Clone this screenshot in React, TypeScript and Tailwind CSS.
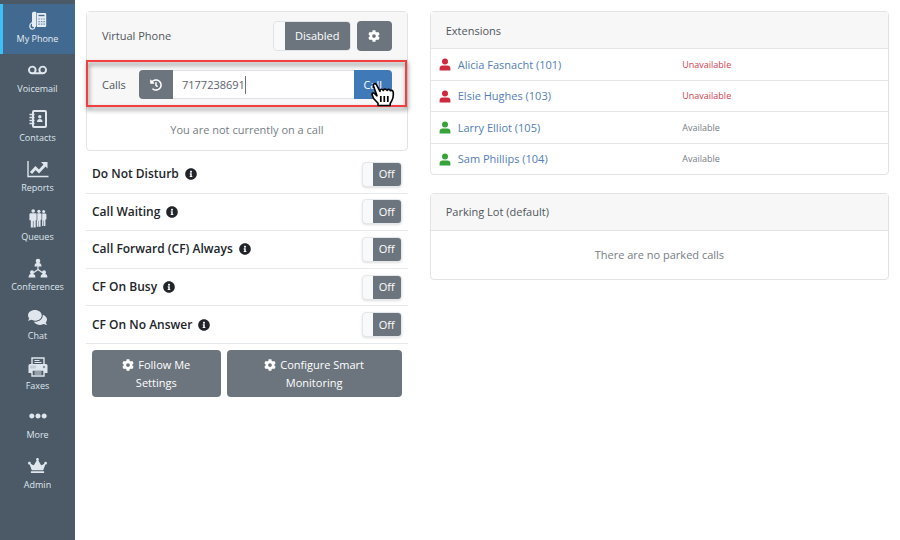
import { useState } from "react";
import type { ReactNode } from "react";
import { FaCog, FaComments, FaCrown, FaEllipsisH, FaHistory, FaInfoCircle, FaVoicemail } from "react-icons/fa";

function DeskPhoneIcon() {
  return (
    <svg viewBox="0 0 18 19" className="h-[19px] w-[18px]" fill="currentColor">
      <path d="M4.600.8h1.600a1.200 1.200 0 0 1 1.200 1.200v12.800a1.200 1.200 0 0 1-1.200 1.200H4.600A1.600 1.600 0 0 1 3 14.400v-12A1.600 1.600 0 0 1 4.600.8z" />
      <path d="M8 2h8a1.200 1.200 0 0 1 1.200 1.200v11.600A1.200 1.200 0 0 1 16 16H8z" />
      <path d="M9.500 4.500h6" stroke="#42698f" strokeWidth="1.400" />
      <path d="M9.300 8h6.600M9.300 10.600h6.600M9.300 13.200h6.600" stroke="#7390ad" strokeWidth="1.200" strokeDasharray="1.600 .9" />
      <path d="M3.200 11.500C1.300 12.500.5 14.200.9 16c.4 1.800 1.800 2.200 3.200 2 1.200-.2 1.600-1 1.600-2" fill="none" stroke="currentColor" strokeWidth="1.200" />
    </svg>
  );
}

function ContactsIcon() {
  return (
    <svg viewBox="0 0 18 18" className="h-[18px] w-[18px]" fill="none" stroke="currentColor">
      <rect x="4" y="1" width="13" height="16" rx="1" strokeWidth="2" />
      <path d="M0.500 4.500h5M0.500 7.500h5M0.500 10.500h5M0.500 13.500h5" strokeWidth="1.600" />
      <circle cx="10.800" cy="6.800" r="1.700" fill="currentColor" stroke="none" />
      <path d="M8 12c0-2 1-3 2.800-3s2.800 1 2.800 3z" fill="currentColor" stroke="none" />
    </svg>
  );
}

function ReportsIcon() {
  return (
    <svg viewBox="0 0 22 18" className="h-[18px] w-[22px]" fill="none" stroke="currentColor">
      <path d="M1 1v15.500h20.500" strokeWidth="1.400" />
      <path d="M4 13l4.500-5 3.500 3.500 6-6.500" strokeWidth="2.800" />
      <path d="M14 2h6.500v6.500z" fill="currentColor" stroke="none" />
    </svg>
  );
}

function QueuesIcon() {
  return (
    <svg viewBox="0 0 18 19" className="h-[19px] w-[18px]" fill="currentColor">
      <circle cx="4.200" cy="2" r="1.800" />
      <path d="M1.800 4.200h4.800q1 0 1 1v6H6.700V18.500H4.500V12h-.6v6.500H1.800v-7.200H.4V5.200q0-1 1.400-1z" />
      <circle cx="9.900" cy="2.300" r="1.600" />
      <path d="M8.300 4.300h3.100q1.100 0 1.100 1v5.500h-.9v7H9.800v-6h-.4v6H7.800v-6.200l.5-.4z" />
      <circle cx="14.700" cy="2.600" r="1.500" />
      <path d="M13.200 4.600h2.800q1.400 0 1.400 1v5h-1v6.400H15v-5.400h-.5V17h-1.400z" />
    </svg>
  );
}

function ConferencesIcon() {
  return (
    <svg viewBox="0 0 20 20" className="h-5 w-5" fill="currentColor">
      <circle cx="10" cy="3" r="2.300" />
      <path d="M6.500 8.400q0-3 2.500-3.300h2q2.500.3 2.500 3.300z" />
      <path d="M10 8v4M10 11.500l-4.500 3.200M10 11.500l4.500 3.200" fill="none" stroke="currentColor" strokeWidth="1.200" />
      <circle cx="4" cy="14.200" r="2" />
      <path d="M.6 19.500q0-3 2.400-3.400h2q2.400.4 2.400 3.400z" />
      <circle cx="16" cy="14.200" r="2" />
      <path d="M12.600 19.500q0-3 2.400-3.400h2q2.400.4 2.400 3.400z" />
    </svg>
  );
}

function FaxIcon() {
  return (
    <svg viewBox="0 0 20 20" className="h-5 w-5">
      <path d="M4 7V1h12v6" fill="none" stroke="#dfe6ee" strokeWidth="1.400" />
      <path d="M6.500 3.500h5M6.500 5.500h7" stroke="#dfe6ee" strokeWidth="1" />
      <path d="M2 7h16q1.500 0 1.500 1.500V16H.5V8.500Q.5 7 2 7z" fill="#dfe6ee" />
      <path d="M3 8.500v3M5 8.500v3M7 8.500v3" stroke="#a9b4c0" strokeWidth="1" />
      <circle cx="16" cy="10" r="1.200" fill="#8794a1" />
      <path d="M4 13h12v6H4z" fill="#4c5a67" stroke="#dfe6ee" strokeWidth="1.400" />
      <path d="M6.500 15h7M6.500 17h7" stroke="#dfe6ee" strokeWidth="1.200" />
    </svg>
  );
}

function PersonIcon({ className }: { className: string }) {
  return (
    <svg viewBox="0 0 12 13" className={`h-[13px] w-3 ${className}`} fill="currentColor">
      <circle cx="6" cy="3.400" r="3" />
      <path d="M.6 12.400V10.500Q.6 7.400 3.600 7.400h4.800q3 0 3 3.100v1.900z" />
    </svg>
  );
}

function HandCursor() {
  return (
    <svg viewBox="0 0 24 26" className="h-[26px] w-6" fill="#fff" stroke="#000" strokeWidth="1.600" strokeLinejoin="round">
      <path d="M7 24.500v-2.200L2.600 17.500 1 13.400c-.2-1.300 1.500-1.900 2.600-.8L6 14.800 2.500 5C1.800 2.800 4.400 1.700 5.400 3.700L9 10.400C8.800 8 11.200 7.600 12.300 9.500c.2-1.900 2.900-1.900 3.800 0 .4-1.600 2.800-1.400 3.300.3 1.200-.9 2.700-.2 2.800 1.500.4 3.500-.1 6.200-1.500 8.500l-1.500 2.700v2z" />
      <path d="M9.800 15v6M13.300 15v6M16.800 15v6" strokeWidth="1.700" />
    </svg>
  );
}

const navItems: { label: string; icon: ReactNode }[] = [
  { label: "My Phone", icon: <DeskPhoneIcon /> },
  { label: "Voicemail", icon: <FaVoicemail size={19} /> },
  { label: "Contacts", icon: <ContactsIcon /> },
  { label: "Reports", icon: <ReportsIcon /> },
  { label: "Queues", icon: <QueuesIcon /> },
  { label: "Conferences", icon: <ConferencesIcon /> },
  { label: "Chat", icon: <FaComments size={19} /> },
  { label: "Faxes", icon: <FaxIcon /> },
  { label: "More", icon: <FaEllipsisH size={18} /> },
  { label: "Admin", icon: <FaCrown size={19} /> },
];

const features = ["Do Not Disturb", "Call Waiting", "Call Forward (CF) Always", "CF On Busy", "CF On No Answer"];

const extensions = [
  { name: "Alicia Fasnacht", number: 101, available: false },
  { name: "Elsie Hughes", number: 103, available: false },
  { name: "Larry Elliot", number: 105, available: true },
  { name: "Sam Phillips", number: 104, available: true },
];

function Sidebar() {
  return (
    <nav className="w-[75px] shrink-0 bg-[#4c5a67] pt-1">
      <ul className="grid h-[495px] auto-rows-fr">
        {navItems.map((item, i) => (
          <li key={item.label}>
            <a
              href="#"
              className={`flex h-full flex-col items-center border-l-3 pr-[3px] pt-1.5 text-[9px] leading-[18px] ${
                i === 0 ? "border-[#3fc0f5] bg-[#42698f] text-[#e6edf5]" : "border-transparent text-[#dfe6ee]"
              }`}
            >
              <span className="flex h-5 items-center">{item.icon}</span>
              <span>{item.label}</span>
            </a>
          </li>
        ))}
      </ul>
    </nav>
  );
}

function FeatureRow({ label }: { label: string }) {
  const [on, setOn] = useState(false);

  return (
    <li className="flex items-center justify-between border-b border-[#e6e9ec] px-1.5">
      <span className="flex items-center gap-1.5 text-xs font-semibold text-[#212529]">
        {label}
        <FaInfoCircle size={12} />
      </span>
      <button
        role="switch"
        aria-checked={on}
        aria-label={label}
        onClick={() => setOn(!on)}
        className="flex h-[25px] w-10 overflow-hidden rounded-sm border border-[#e4e7ea] bg-[#f8f9fa] text-white shadow-sm"
      >
        <span className="ml-auto flex h-full w-7 items-center justify-center bg-[#6c757d]">{on ? "On" : "Off"}</span>
      </button>
    </li>
  );
}

function PhonePanel() {
  const [number, setNumber] = useState("7177238691");

  return (
    <section className="px-[11px]">
      <div className="relative rounded-sm border border-[#e3e3e3]">
        <div className="flex items-center justify-between border-b border-[#e3e3e3] bg-[#f7f7f7] px-[15px] py-[9px]">
          <h2 className="text-[#4f565c]">Virtual Phone</h2>
          <div className="flex gap-1.5">
            <button
              role="switch"
              aria-checked="false"
              aria-label="Virtual Phone"
              className="flex h-[30px] w-[78px] overflow-hidden rounded-sm border border-[#e1e4e7] bg-[#f8f9fa] text-white"
            >
              <span className="ml-auto flex h-full w-[65px] items-center justify-center bg-[#6c757d]">Disabled</span>
            </button>
            <button aria-label="Phone settings" className="flex h-[30px] w-[35px] items-center justify-center rounded-sm bg-[#6c757d] text-white">
              <FaCog size={12} />
            </button>
          </div>
        </div>
        <div className="flex items-center bg-[#f7f7f7] px-[15px] py-[9px]">
          <label htmlFor="dial" className="w-[37px] text-[#4f565c]">Calls</label>
          <button aria-label="Call history" className="flex h-[29px] w-[34px] items-center justify-center rounded-l-sm bg-[#6c757d] text-white">
            <FaHistory size={12} />
          </button>
          <div className="flex h-[29px] min-w-0 flex-1 items-center border-y border-[#dde1e6] bg-white pl-[9px]">
            <input
              id="dial"
              type="text"
              value={number}
              onChange={(e) => setNumber(e.target.value)}
              className="field-sizing-content border-r border-[#6f757b] text-[#5c636a] outline-none"
            />
          </div>
          <button className="h-[29px] w-[38px] rounded-r-sm bg-[#3f79b7] text-white">Call</button>
        </div>
        <p className="pb-[11px] pt-[13px] text-center text-[#767d84]">You are not currently on a call</p>
        <div className="pointer-events-none absolute -left-px right-0 top-12 h-[47px] border-2 border-[#f23f40] drop-shadow-[1px_3px_2px_rgba(0,0,0,0.5)]" />
        <div className="pointer-events-none absolute right-3 top-[69px]">
          <HandCursor />
        </div>
      </div>

      <ul className="mt-[5px] grid h-[188px] auto-rows-fr">
        {features.map((label) => (
          <FeatureRow key={label} label={label} />
        ))}
      </ul>

      <div className="mt-1.5 grid grid-cols-[11fr_15fr] gap-1.5 px-1.5 text-white">
        <button className="rounded-sm bg-[#6c757d] px-7 pb-[5px] pt-1.5">
          <FaCog size={12} className="mr-1 inline-block align-[-2px]" />
          Follow Me Settings
        </button>
        <button className="rounded-sm bg-[#6c757d] px-7 pb-[5px] pt-1.5">
          <FaCog size={12} className="mr-1 inline-block align-[-2px]" />
          Configure Smart Monitoring
        </button>
      </div>
    </section>
  );
}

function ExtensionsCard() {
  return (
    <div className="rounded-sm border border-[#e3e3e3]">
      <h2 className="bg-[#f7f7f7] px-[15px] pb-2 pt-[10px] text-[#4f565c]">Extensions</h2>
      <table className="h-[126px] w-full text-left">
        <tbody>
          {extensions.map((ext) => (
            <tr key={ext.number} className="border-t border-[#e6e6e6]">
              <td className="w-[55%] pl-2 pt-px">
                <a href="#" className="flex items-center gap-[7px] text-[#527eb8]">
                  <PersonIcon className={ext.available ? "text-[#35a23a]" : "text-[#d0283c]"} />
                  {ext.name} ({ext.number})
                </a>
              </td>
              <td className={`pt-px text-[9px] ${ext.available ? "text-[#767d84]" : "text-[#d2404f]"}`}>
                {ext.available ? "Available" : "Unavailable"}
              </td>
            </tr>
          ))}
        </tbody>
      </table>
    </div>
  );
}

export default function App() {
  return (
    <div className="flex min-h-screen bg-white font-['Open_Sans','Noto_Sans',sans-serif] text-[11px] leading-[18px]">
      <Sidebar />
      <main className="grid flex-1 grid-cols-12 content-start pt-[11px]">
        <div className="col-span-5">
          <PhonePanel />
        </div>
        <div className="col-span-7 flex flex-col gap-[18px] px-[11px]">
          <ExtensionsCard />
          <section className="rounded-sm border border-[#e3e3e3]">
            <h2 className="border-b border-[#e3e3e3] bg-[#f7f7f7] px-[15px] py-[9px] text-[#4f565c]">Parking Lot (default)</h2>
            <p className="py-[15px] text-center text-[#767d84]">There are no parked calls</p>
          </section>
        </div>
      </main>
    </div>
  );
}
